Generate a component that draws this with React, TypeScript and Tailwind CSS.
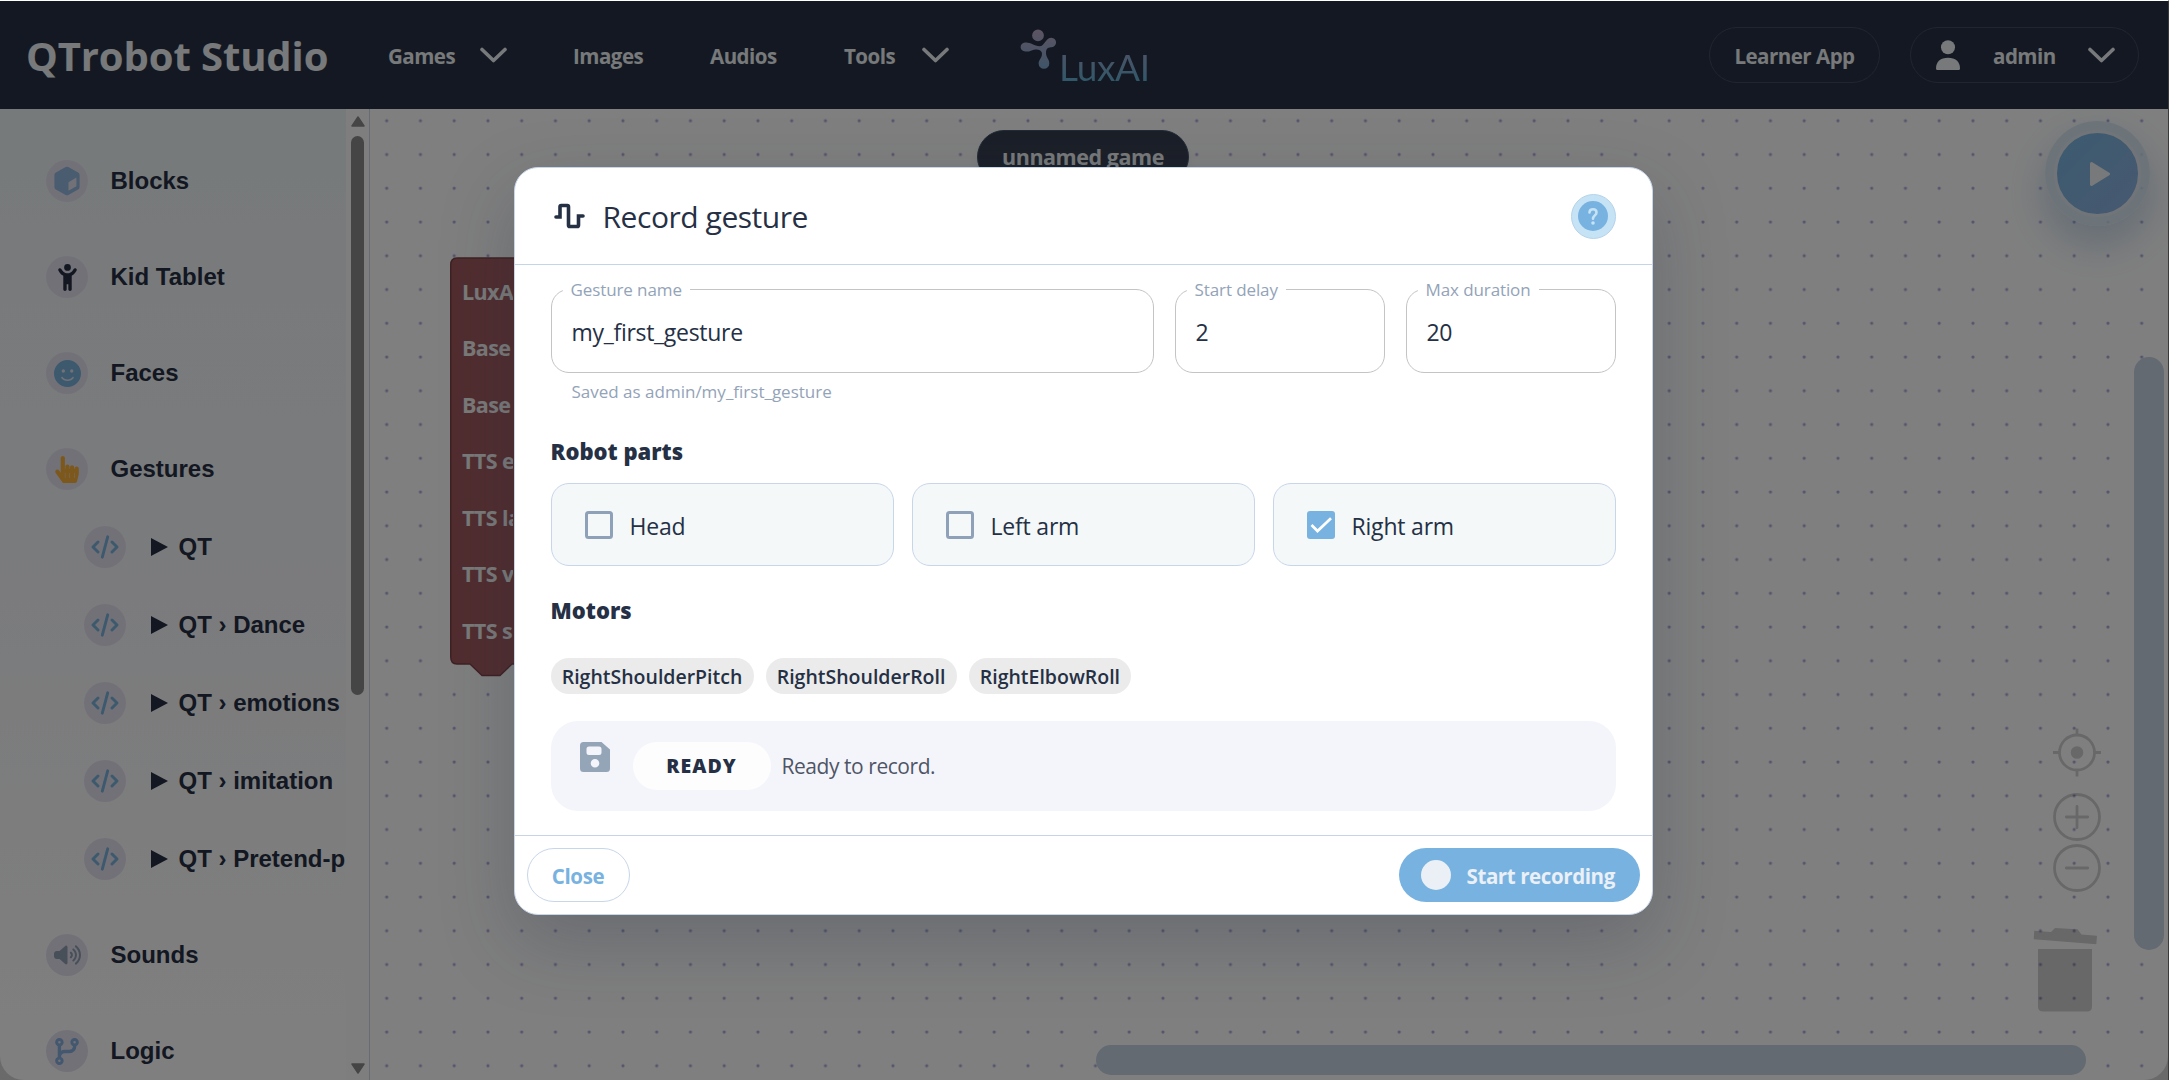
import type { ReactNode } from "react";
import { FaHandPointer } from "react-icons/fa";
import { FaChildReaching, FaCodeBranch, FaFaceSmile, FaVolumeHigh } from "react-icons/fa6";

function Chevron() {
  return (
    <svg viewBox="0 0 27 16" className="h-4 w-[27px]" fill="none">
      <path
        d="M2 2.5 13.5 13.5 25 2.5"
        stroke="currentColor"
        strokeWidth="3.6"
        strokeLinecap="round"
        strokeLinejoin="round"
      />
    </svg>
  );
}

function LuxLogo() {
  return (
    <div className="flex h-[54px] items-start">
      <svg viewBox="0 0 37 40" className="mt-px h-10 w-[37px]">
        <defs>
          <linearGradient id="lux" x1="0" y1="0" x2="0" y2="1">
            <stop offset="0" stopColor="#b9a8c6" />
            <stop offset="1" stopColor="#7fa9cf" />
          </linearGradient>
        </defs>
        <path
          fill="url(#lux)"
          d="M18 .5a5.900 5.900 0 1 1 0 11.800a5.900 5.900 0 1 1 0-11.800ZM5 13.500C10 12.800 14 16.800 19.500 17.200C24.500 17.400 25.500 8.700 31.500 8.700A4.800 4.800 0 0 1 31 18.300C27.500 18.500 26 20 26 24C26 28.500 29.500 30.500 29.300 34.500A5.300 5.300 0 0 1 18.600 34.500C18.600 30.500 23 28 21.800 23.500C20.500 19.500 15 20 11 21.700C7.500 23.200 1 23.200 .6 18.300A4.600 4.600 0 0 1 5 13.500Z"
        />
      </svg>
      <span className="mt-[17px] ml-[2px] bg-linear-to-b from-[#94a6cf] from-20% to-[#63b0d2] to-80% bg-clip-text font-['Lato',sans-serif] text-[37px] leading-[44px] font-normal tracking-[-0.3px] text-transparent">
        LuxAI
      </span>
    </div>
  );
}

function Header() {
  return (
    <header className="flex h-[108px] shrink-0 items-center bg-[#273044] pr-[29px] text-[20.5px] font-bold tracking-[-0.5px] text-[#eef3f5]">
      <div className="w-[388px] pt-[2px] pl-[26px] text-[40px] tracking-[-0.1px]">QTrobot Studio</div>
      <div className="flex w-[185px] items-center">
        <span className="w-[92px] pt-[3px]">Games</span>
        <Chevron />
      </div>
      <span className="w-[137px] pt-[3px]">Images</span>
      <span className="w-[134px] pt-[3px]">Audios</span>
      <div className="flex w-[176px] items-center">
        <span className="w-[78px] pt-[3px]">Tools</span>
        <Chevron />
      </div>
      <LuxLogo />
      <div className="ml-auto flex gap-[30px]">
        <button className="flex h-14 w-[171px] items-center justify-center rounded-full border border-[#434b5c] pt-[3px] font-bold">
          Learner App
        </button>
        <button className="flex h-14 w-[229px] items-center rounded-full border border-[#434b5c] pl-[25px] font-bold">
          <svg viewBox="0 0 24 30" className="h-[30px] w-6" fill="currentColor">
            <circle cx="12" cy="7.3" r="7" />
            <path d="M0 28.500C0 21.500 4.500 17.700 12 17.700S24 21.500 24 28.500Q24 30 22.500 30H1.500Q0 30 0 28.500Z" />
          </svg>
          <span className="ml-[33px] w-[95px] pt-[3px] text-left">admin</span>
          <Chevron />
        </button>
      </div>
    </header>
  );
}

function CubeIcon() {
  return (
    <svg viewBox="0 0 28 30" className="h-[30px] w-7">
      <path
        fillRule="evenodd"
        fill="#94b8de"
        d="M12.700 1a3 3 0 0 1 2.600 0l9.800 5.400a3 3 0 0 1 1.500 2.600v12a3 3 0 0 1-1.500 2.600l-9.800 5.400a3 3 0 0 1-2.600 0l-9.800-5.400a3 3 0 0 1-1.500-2.600V9a3 3 0 0 1 1.500-2.600ZM15.500 16.200v8.600l7.900-4.500v-8.800Z"
      />
    </svg>
  );
}

function CodeIcon() {
  return (
    <svg
      viewBox="0 0 28 24"
      className="h-6 w-7"
      fill="none"
      stroke="#78b2dc"
      strokeWidth="2.900"
      strokeLinecap="round"
      strokeLinejoin="round"
    >
      <path d="M7 7 2 12 7 17M21 7 26 12 21 17M16.700 1.800 11.300 22.200" />
    </svg>
  );
}

type Item = { label: string; icon: ReactNode };

const categories: Item[] = [
  { label: "Blocks", icon: <CubeIcon /> },
  { label: "Kid Tablet", icon: <FaChildReaching className="h-[27px] w-[21px] text-[#252e42]" /> },
  { label: "Faces", icon: <FaFaceSmile className="size-[27px] text-[#78b2dc]" /> },
  { label: "Gestures", icon: <FaHandPointer className="h-[27px] w-6 text-[#fbb03b]" /> },
];

const gestureFolders = ["QT", "QT › Dance", "QT › emotions", "QT › imitation", "QT › Pretend-p"];

const moreCategories: Item[] = [
  { label: "Sounds", icon: <FaVolumeHigh className="h-[22px] w-[27px] text-[#8f9fb3]" /> },
  { label: "Logic", icon: <FaCodeBranch className="h-[27px] w-6 text-[#86aede]" /> },
];

function CategoryRow({ label, icon }: Item) {
  return (
    <div className="flex h-24 items-center pl-[46px]">
      <span className="flex size-[42px] items-center justify-center rounded-full bg-[#e4e3f1]">{icon}</span>
      <span className="ml-[22.5px]">{label}</span>
    </div>
  );
}

function Sidebar() {
  return (
    <aside className="flex w-[370px] shrink-0 border-r border-[#cbd8e6] bg-linear-to-b from-[#eef4f6] via-[#f6f7fa] to-[#ffffff] font-['Liberation_Sans',Arial,sans-serif] text-[24px] font-bold whitespace-nowrap text-[#252e42]">
      <div className="w-[346px] overflow-hidden pt-6">
        {categories.map((c) => (
          <CategoryRow key={c.label} {...c} />
        ))}
        <div className="-mt-[9px] mb-[9px]">
          {gestureFolders.map((f) => (
            <div key={f} className="flex h-[78px] items-center pl-[84px]">
              <span className="flex size-[42px] shrink-0 items-center justify-center rounded-full bg-[#e4e3f1]">
                <CodeIcon />
              </span>
              <svg viewBox="0 0 17 18" className="ml-[25px] h-[18px] w-[17px] shrink-0">
                <path d="M0 0 17 9 0 18Z" fill="currentColor" />
              </svg>
              <span className="ml-[10.5px]">{f}</span>
            </div>
          ))}
        </div>
        {moreCategories.map((c) => (
          <CategoryRow key={c.label} {...c} />
        ))}
      </div>
      <div className="flex flex-1 flex-col items-center bg-[#fcfcfc] pt-[7px] pb-[6px]">
        <svg viewBox="0 0 14 11" className="h-[11px] w-[14px]">
          <path d="M7 1 13 10H1Z" fill="#8b8b8b" stroke="#8b8b8b" strokeWidth="1.5" strokeLinejoin="round" />
        </svg>
        <div className="mt-[9px] h-[559px] w-[13px] rounded-full bg-[#8b8b8b]" />
        <svg viewBox="0 0 14 11" className="mt-auto h-[11px] w-[14px]">
          <path d="M7 10 13 1H1Z" fill="#8b8b8b" stroke="#8b8b8b" strokeWidth="1.5" strokeLinejoin="round" />
        </svg>
      </div>
    </aside>
  );
}

const blockFields = ["LuxAI", "Base", "Base", "TTS e", "TTS la", "TTS v", "TTS s"];

function Workspace() {
  return (
    <main className="relative flex-1 overflow-hidden bg-white">
      <svg className="absolute inset-0 size-full">
        <defs>
          <pattern id="dots" x="-0.2" y="-5.2" width="33.75" height="33.75" patternUnits="userSpaceOnUse">
            <circle cx="16.9" cy="16.9" r="1.6" fill="#a9a9d8" />
          </pattern>
        </defs>
        <rect width="100%" height="100%" fill="url(#dots)" />
      </svg>

      {/* setup block */}
      <div className="absolute top-[148px] left-[80px] w-[320px]">
        <svg viewBox="0 0 320 420" className="absolute h-[420px] w-[320px]">
          <path
            d="M.75 8Q.75 1 7 1H319V407H62L50 418.500H32L20 407H7Q.75 407 .75 400Z"
            fill="#a25b5f"
            stroke="#7d4347"
            strokeWidth="1.5"
            strokeLinejoin="round"
          />
        </svg>
        <div className="relative ml-3 flex w-[51px] flex-col overflow-hidden pt-[6.5px] text-[21.5px] font-bold tracking-[-0.6px] whitespace-nowrap text-[#f4f4f4]">
          {blockFields.map((f, i) => (
            <span key={i} className="h-[56.5px] leading-[56.5px]">
              {f}
            </span>
          ))}
        </div>
      </div>

      {/* game title */}
      <div className="absolute top-[21px] left-[607px] flex h-[54px] w-[212px] items-center justify-center rounded-full border border-[#45566d] bg-[#363f50] text-[21.5px] font-bold tracking-[-0.45px] text-[#eef3f5] shadow-lg">
        unnamed game
      </div>

      {/* run button */}
      <div className="absolute top-[12px] left-[1675px] flex size-[105px] items-center justify-center rounded-full bg-[#cfe2f1]/80 shadow-[0_18px_42px_rgba(90,140,190,0.35)]">
        <div className="flex size-[87px] items-center justify-center rounded-full border-[3px] border-[#e3ebf2] bg-linear-to-br from-[#78b6e0] to-[#8fb2e0]">
          <svg viewBox="0 0 20 26" className="ml-[5px] h-[26px] w-5">
            <path d="M1.5 2.5 18.5 13 1.5 23.5Z" fill="#eef3f5" stroke="#eef3f5" strokeWidth="3" strokeLinejoin="round" />
          </svg>
        </div>
      </div>

      {/* zoom controls */}
      <svg
        viewBox="0 0 48 166"
        className="absolute top-[619px] left-[1683px] h-[166px] w-12"
        fill="none"
        stroke="#000"
        strokeWidth="2.8"
        opacity="0.18"
      >
        <circle cx="24" cy="24.5" r="17.5" />
        <circle cx="24" cy="24.5" r="6.3" fill="#000" stroke="none" />
        <path d="M24 .5V7M24 42V48.500M0 24.500H6.500M41.500 24.500H48" />
        <circle cx="24" cy="89" r="22.5" />
        <path d="M13.300 89H34.700M24 78.300V99.700" strokeLinecap="round" />
        <circle cx="24" cy="140" r="22.5" />
        <path d="M13.300 140H34.700" strokeLinecap="round" />
      </svg>

      {/* trash can */}
      <svg viewBox="0 0 64 86" className="absolute top-[818px] left-[1663px] h-[86px] w-16" fill="#000" opacity="0.18">
        <path d="M.7 12.300 1.200 3.800 18 5 22 1 44.500 2.300 48.500 7.500 64 8.800 63.300 17.300Z" />
        <path d="M5 22H59V79.500Q59 84.500 54 84.500H10Q5 84.500 5 79.500Z" />
      </svg>

      <div className="absolute top-[248px] left-[1764px] h-[593px] w-[30px] rounded-full bg-[#c7d4e2]" />
      <div className="absolute top-[936px] left-[726px] h-[30px] w-[990px] rounded-full bg-[#c7d4e2]" />
    </main>
  );
}

function Field({ label, value, className }: { label: string; value: string; className: string }) {
  return (
    <div className={"relative flex h-[84px] items-center rounded-[18px] border border-[#c4c4c4] pl-[20px] " + className}>
      <label className="absolute -top-[13px] left-[11px] bg-white px-2 text-[17px] leading-[26px] tracking-[-0.1px] text-[#93a3b8]">
        {label}
      </label>
      <span className="pt-[3px] text-[23px] tracking-[-0.3px]">{value}</span>
    </div>
  );
}

function PartCard({ label, checked }: { label: string; checked?: boolean }) {
  return (
    <div className="flex h-[83px] items-center rounded-[18px] border border-[#c8d6ea] bg-[#f4f8f9] pl-[33px]">
      <svg viewBox="0 0 28 28" className="size-7" fill="none">
        {checked ? (
          <>
            <rect width="28" height="28" rx="3" fill="#78b2e0" />
            <path d="m4.500 14 6 6L24 7.200" stroke="#fff" strokeWidth="2.7" />
          </>
        ) : (
          <rect x="1.5" y="1.5" width="25" height="25" rx="2" stroke="#8fa1b8" strokeWidth="3" />
        )}
      </svg>
      <span className="ml-[17px] pt-[3px] text-[23px] tracking-[-0.2px]">{label}</span>
    </div>
  );
}

function RecordGestureDialog() {
  return (
    <div className="flex w-[1139px] flex-col rounded-3xl border border-[#c8d6ea] bg-white text-[#253045] shadow-[0_27px_72px_rgba(37,48,69,0.25)]">
      <div className="flex h-[97px] items-center border-b border-[#c3d5e6] px-9">
        <svg viewBox="0 0 32 26" className="ml-[3px] h-[26px] w-8" fill="none">
          <path
            d="M2 14H6V3.800Q6 2.500 7.300 2.500H13.200Q14.500 2.500 14.500 3.800V22.200Q14.500 23.500 15.800 23.500H23.200Q24.500 23.500 24.500 22.200V13H29"
            stroke="currentColor"
            strokeWidth="3.6"
            strokeLinecap="round"
          />
        </svg>
        <h2 className="ml-[17px] pt-px text-[30px] font-medium tracking-[-0.45px]">Record gesture</h2>
        <button className="ml-auto flex size-[45px] items-center justify-center rounded-full border border-[#b5d3ec] bg-[#c5e3f4]">
          <svg viewBox="0 0 30 30" className="size-[30px]" fill="none">
            <circle cx="15" cy="15" r="15" fill="#78b2e0" />
            <path
              d="M11.500 11.500C11.700 7.200 18.500 7.200 18.500 11.500C18.500 14.500 15 14.300 15 17.800"
              stroke="#c5e3f4"
              strokeWidth="2.6"
              strokeLinecap="round"
            />
            <circle cx="15" cy="22" r="1.8" fill="#c5e3f4" />
          </svg>
        </button>
      </div>

      <div className="px-9 pt-6 pb-6">
        <div className="flex gap-[21px]">
          <Field label="Gesture name" value="my_first_gesture" className="flex-1" />
          <Field label="Start delay" value="2" className="w-[210px]" />
          <Field label="Max duration" value="20" className="w-[210px]" />
        </div>
        <p className="mt-[6px] pl-[21px] text-[17px] leading-[26px] text-[#93a3b8]">
          Saved as admin/my_first_gesture
        </p>

        <h3 className="mt-[30px] text-[22px] leading-8 font-extrabold">Robot parts</h3>
        <div className="mt-4 grid grid-cols-3 gap-[18px]">
          <PartCard label="Head" />
          <PartCard label="Left arm" />
          <PartCard label="Right arm" checked />
        </div>

        <h3 className="mt-[28px] text-[22px] leading-8 font-extrabold">Motors</h3>
        <div className="mt-8 flex gap-3 text-[19.5px] font-semibold">
          {["RightShoulderPitch", "RightShoulderRoll", "RightElbowRoll"].map((m) => (
            <span key={m} className="flex h-9 items-center rounded-full bg-[#ebebeb] px-[11.2px] pt-px">
              {m}
            </span>
          ))}
        </div>

        <div className="mt-[27px] flex h-[90px] items-center rounded-[27px] bg-[#f4f5fb] pl-[29px]">
          <svg viewBox="0 0 30 30" className="mb-[19px] size-[30px]">
            <path
              fillRule="evenodd"
              fill="#94a5b8"
              d="M3.500 0H21.500L30 7.500V26.500Q30 30 26.500 30H3.500Q0 30 0 26.500V3.500Q0 0 3.500 0ZM9 4.500Q6.500 4.500 6.500 7V10.500Q6.500 13 9 13H19Q21.500 13 21.500 10.500V7Q21.500 4.500 19 4.500ZM15 17A4.300 4.300 0 1 0 15 25.600A4.300 4.300 0 1 0 15 17Z"
            />
          </svg>
          <span className="ml-[23px] flex h-12 w-[138px] items-center justify-center rounded-full bg-[#fdfdfe] text-[19.5px] font-extrabold tracking-[1px]">
            READY
          </span>
          <span className="ml-[11px] pt-[2px] text-[21px] tracking-[-0.45px] text-[#4f5566]">Ready to record.</span>
        </div>
      </div>

      <div className="flex items-center justify-between border-t border-[#c8d3e6] p-3 text-[20.5px] font-bold tracking-[-0.4px]">
        <button className="h-[54px] w-[103px] rounded-full border border-[#c8d6ea] pt-[3px] text-[#78b2e0]">
          Close
        </button>
        <button className="flex h-[54px] w-[241px] items-center rounded-full bg-[#78b2e0] pl-[22px] text-[#eaf0f5]">
          <span className="size-[30px] rounded-full bg-[#eaf0f5]" />
          <span className="ml-4 pt-[3px]">Start recording</span>
        </button>
      </div>
    </div>
  );
}

export default function App() {
  return (
    <div className="relative h-[1080px] w-[2169px] overflow-hidden border-t border-r border-t-white border-r-[#3a3a3a] bg-[#d5d5d5] font-['Open_Sans','Segoe_UI',sans-serif]">
      <div className="flex h-full flex-col overflow-hidden rounded-b-3xl">
        <Header />
        <div className="flex min-h-0 flex-1">
          <Sidebar />
          <Workspace />
        </div>
      </div>

      <div className="absolute inset-0 flex items-start justify-center bg-black/50 pt-[166px] pr-[2px]">
        <RecordGestureDialog />
      </div>
    </div>
  );
}
